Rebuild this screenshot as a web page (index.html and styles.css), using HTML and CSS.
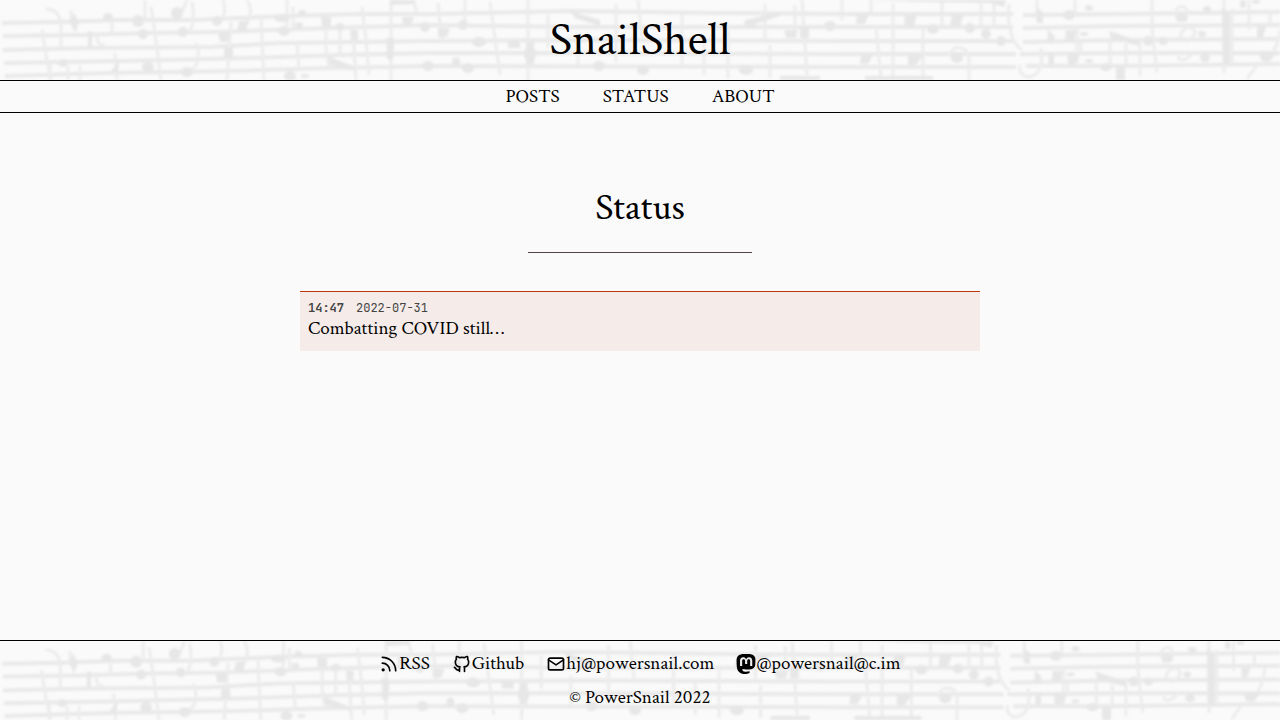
FILE: index.html
```html
<!DOCTYPE html>
<html lang="en">
<head>
<meta charset="utf-8">
<meta name="viewport" content="width=device-width, initial-scale=1">
<title>Status - SnailShell</title>
<link rel="stylesheet" href="styles.css">
</head>
<body>
<svg class="defs" aria-hidden="true">
  <defs>
    <g id="score">
      <g class="staff">
        <path d="M2 23L60 22L120 20L195 20L285 16L360 14L430 14L570 11L720 13L850 14H1013M1023 15L1120 14L1280 12H1320"/>
        <path d="M3 36L80 35L150 33L220 32L330 28L430 25L570 27L740 27L850 27H1013M1023 28L1120 26L1280 25H1320"/>
        <path d="M3 50L90 48L210 47L280 43L430 41L600 40L850 41H1013M1023 42L1120 40L1280 39H1320"/>
        <path d="M4 63L120 61L250 58L340 55L430 53L570 53L850 54H1016M1020 54L1140 53L1280 53H1320"/>
        <path d="M5 76L110 73L230 71L330 68L430 66L850 67H1016M1026 66L1120 66L1280 64H1320"/>
      </g>
      <g class="stems">
        <path d="M46 9Q60 9 61 26V48M42 30L46 55L51 80M71 10V24M99 32Q94 44 105 46M112 23V35M115 53L117 80M145 0V21M151 7L155 33L161 80M187 0L182 12M192 2Q196 25 188 33M196 43Q203 63 190 71M223 0Q227 12 221 19M247 0Q255 12 245 24M231 22L227 80M261 16L264 80M287 0V26M293 7V28M297 42L299 70M326 25V48L329 68M340 29V53M362 7L366 40L369 75M391 0V80M413 0L417 13M353 30L356 80M50 64V80M68 66V80M80 66V80"/>
        <path d="M438 3L442 42M465 0V25M490 2L500 75M528 0V80M548 15V48M578 35V65M616 4V62M638 0L642 38M682 14V66M704 42V75M728 30V78M765 4V40M795 5V38M802 0L807 75M842 0V20M770 45V78"/>
        <path d="M871 0V12M876 26L881 80M893 4V78M923 28V78M942 2V25M969 80V57Q967 46 955 48Q948 53 953 59M981 4V28M994 4V29M1009 4Q1006 38 1022 50M1037 0V20M1041 48Q1045 75 1028 77Q1018 75 1020 65M1075 0V15M1077 27V65M1081 42V55M1110 40V65M1126 44V64M1140 43V76M1152 0V28L1157 72M1176 17Q1174 5 1185 7Q1192 17 1177 21M1180 38Q1183 25 1192 28Q1200 33 1186 42M1178 56Q1181 66 1195 51M1224 0V73M1232 9V64M1249 0V30M1270 10V26M1281 26Q1278 52 1262 66M1247 79L1257 65"/>
      </g>
      <g class="beams">
        <path d="M88 31h4v16h-4zM111 71L119 61L118 74ZM390 0L416 0L414 4L391 5ZM328 56L355 67V71L330 65ZM570 11L600 20V26L575 18ZM745 20L780 12V16L750 26ZM870 0L1006 0L1004 7L990 3L923 2ZM865 76h68v4h-68zM1109 31L1140 41V46L1111 39ZM1222 8l8 5v51h-7zM1116 66h9v14h-9zM780 76h40v4h-40z"/>
      </g>
      <g class="notes">
        <path d="M74 13L79 22L75 33L70 22ZM218 33h12l-2 9h-8zM224 48h9v10h-9zM239 21h10l-3 10h-9zM321 17h10v10h-9zM350 30h8v10h-7zM402 17h12l-3 8h-8zM386 38h8v12h-7zM438 28h12l-3 9h-9zM526 42h8v22h-8zM508 42h12v6h-12zM784 30h14l-3 8h-9zM800 26h9v12h-9zM857 14h12l-4 10h-9zM905 15h12l-3 11h-10zM952 14h12l-4 12h-10zM861 55h12l-5 9h-8zM908 54h16l-8 11h-8zM1037 8l6 4v11h-6zM1048 29l7 8-2 6h-6zM1066 30h10l-2 11h-9zM1049 53h5v11h-6zM1067 53h14l-6 11h-7zM1257 27h9l-3 10h-6zM1258 52h19l-7 9h-8z"/>
        <g>
          <ellipse cx="108" cy="17" rx="5" ry="4"/><ellipse cx="138" cy="21" rx="6" ry="6"/><ellipse cx="143" cy="34" rx="5" ry="5"/><ellipse cx="177" cy="13" rx="6" ry="6"/><ellipse cx="183" cy="32" rx="5" ry="5"/><ellipse cx="63" cy="63" rx="5" ry="4"/><ellipse cx="148" cy="67" rx="6" ry="5"/><ellipse cx="187" cy="72" rx="6" ry="5"/><ellipse cx="217" cy="21" rx="5" ry="5"/><ellipse cx="282" cy="18" rx="8" ry="4"/><ellipse cx="284" cy="31" rx="6" ry="5"/><ellipse cx="302" cy="13" rx="4" ry="3"/><ellipse cx="299" cy="25" rx="4" ry="3"/><ellipse cx="340" cy="27" rx="5" ry="4"/><ellipse cx="390" cy="54" rx="4" ry="6"/><ellipse cx="290" cy="76" rx="6" ry="5"/><ellipse cx="305" cy="76" rx="4" ry="2"/><ellipse cx="425" cy="27" rx="5" ry="5"/><ellipse cx="428" cy="66" rx="6" ry="5"/>
          <ellipse cx="463" cy="25" rx="5" ry="5"/><ellipse cx="479" cy="42" rx="7" ry="5"/><ellipse cx="456" cy="62" rx="4" ry="5"/><ellipse cx="468" cy="68" rx="6" ry="5"/><ellipse cx="515" cy="44" rx="5" ry="4"/><ellipse cx="530" cy="54" rx="6" ry="8"/><ellipse cx="599" cy="66" rx="6" ry="5"/><ellipse cx="643" cy="70" rx="6" ry="5"/><ellipse cx="750" cy="24" rx="6" ry="4"/><ellipse cx="830" cy="26" rx="6" ry="5"/><ellipse cx="746" cy="70" rx="7" ry="5"/>
          <ellipse cx="933" cy="29" rx="6" ry="5"/><ellipse cx="970" cy="28" rx="5" ry="5"/><ellipse cx="986" cy="34" rx="5" ry="5"/><ellipse cx="1001" cy="41" rx="5" ry="5"/><ellipse cx="957" cy="58" rx="6" ry="5"/><ellipse cx="1069" cy="15" rx="6" ry="5"/><ellipse cx="1089" cy="8" rx="4" ry="3"/><ellipse cx="1084" cy="34" rx="4" ry="2"/><ellipse cx="1089" cy="61" rx="4" ry="2"/><ellipse cx="1106" cy="67" rx="6" ry="4"/><ellipse cx="1148" cy="41" rx="5" ry="5"/><ellipse cx="1163" cy="41" rx="5" ry="4"/><ellipse cx="1207" cy="9" rx="4" ry="3"/><ellipse cx="1202" cy="34" rx="4" ry="3"/><ellipse cx="1205" cy="58" rx="5" ry="4"/><ellipse cx="1182" cy="18" rx="6" ry="4"/><ellipse cx="1243" cy="4" rx="3" ry="4"/><ellipse cx="1256" cy="1" rx="4" ry="3"/>
        </g>
      </g>
    </g>
  </defs>
</svg>

<header class="banner">
  <svg class="score" viewBox="0 0 1280 80" preserveAspectRatio="xMinYMin slice" aria-hidden="true"><use href="#score"/></svg>
  <a class="site-title" href="#">SnailShell</a>
</header>
<nav class="nav">
  <a href="#">POSTS</a>
  <a href="#">STATUS</a>
  <a href="#">ABOUT</a>
</nav>

<main class="main">
  <h1 class="page-title">Status</h1>
  <hr class="rule">
  <article class="status">
    <div class="stamp"><b>14:47</b><time datetime="2022-07-31">2022-07-31</time></div>
    <p class="message">Combatting COVID still…</p>
  </article>
</main>

<footer class="footer">
  <svg class="score" viewBox="0 0 1296 80" preserveAspectRatio="xMinYMin slice" aria-hidden="true"><use href="#score"/></svg>
  <div class="links">
    <a href="#"><svg class="icon" viewBox="0 0 24 24" aria-hidden="true"><path d="M4 11a9 9 0 0 1 9 9M4 4a16 16 0 0 1 16 16"/><circle cx="5" cy="19" r="1"/></svg>RSS</a>
    <a href="#"><svg class="icon" viewBox="0 0 24 24" aria-hidden="true"><path d="M9 19c-4.300 1.400-4.300-2.500-6-3m12 5v-3.500c0-1 .1-1.400-.5-2 2.800-.3 5.500-1.400 5.500-6a4.600 4.600 0 0 0-1.300-3.200 4.200 4.200 0 0 0-.1-3.200s-1.100-.3-3.500 1.300a12.300 12.300 0 0 0-6.200 0C6.500 2.800 5.400 3.100 5.400 3.100a4.200 4.200 0 0 0-.1 3.200A4.600 4.600 0 0 0 4 9.500c0 4.600 2.700 5.700 5.500 6-.6.600-.6 1.200-.5 2V21"/></svg>Github</a>
    <a href="#"><svg class="icon" viewBox="0 0 24 24" aria-hidden="true"><rect x="3" y="5" width="18" height="14" rx="2"/><path d="M3 7l9 6 9-6"/></svg>hj@powersnail.com</a>
    <a href="#"><svg class="icon solid" viewBox="0 0 24 24" aria-hidden="true"><path d="M23.268 5.313c-.35-2.578-2.617-4.610-5.304-5.004C17.510.242 15.792 0 11.813 0h-.03c-3.980 0-4.835.242-5.288.309C3.882.692 1.496 2.518.917 5.127.64 6.412.61 7.837.661 9.143c.074 1.874.088 3.745.26 5.611.118 1.240.325 2.470.62 3.680.55 2.237 2.777 4.098 4.960 4.857 2.336.792 4.849.923 7.256.380.265-.061.527-.132.786-.213.585-.184 1.270-.390 1.774-.753a.057.057 0 0 0 .023-.043v-1.809a.052.052 0 0 0-.02-.041.053.053 0 0 0-.046-.010 20.282 20.282 0 0 1-4.709.545c-2.730 0-3.463-1.284-3.674-1.818a5.593 5.593 0 0 1-.319-1.433.053.053 0 0 1 .066-.054c1.517.363 3.072.546 4.632.546.376 0 .750 0 1.125-.010 1.570-.044 3.224-.124 4.768-.422 2.435-.464 4.753-1.920 4.989-5.604.008-.145.030-1.520.030-1.670.002-.512.167-3.630-.024-5.545zm-3.748 9.195h-2.561V8.290c0-1.309-.550-1.976-1.670-1.976-1.230 0-1.846.790-1.846 2.350v3.403h-2.546V8.663c0-1.560-.617-2.350-1.848-2.350-1.112 0-1.668.668-1.670 1.977v6.218H4.822V8.102c0-1.310.337-2.350 1.011-3.120.696-.770 1.608-1.164 2.740-1.164 1.311 0 2.302.500 2.962 1.498l.638 1.060.638-1.060c.660-.999 1.650-1.498 2.960-1.498 1.130 0 2.043.395 2.740 1.164.675.770 1.012 1.810 1.012 3.120z"/></svg>@powersnail@c.im</a>
  </div>
  <p class="copyright">© PowerSnail 2022</p>
</footer>
</body>
</html>
```
FILE: styles.css
```css
* { box-sizing: border-box; }

body {
  margin: 0;
  min-height: 100vh;
  display: flex;
  flex-direction: column;
  background: #fafafa;
  color: #000;
  font: 19px/26px "Crimson Text", "Liberation Serif", serif;
}

a { color: inherit; text-decoration: none; }

.defs { position: absolute; width: 0; height: 0; }

.banner, .footer { position: relative; overflow: hidden; }

.score {
  position: absolute;
  inset: 0;
  width: 100%;
  height: 100%;
  z-index: -1;
  filter: blur(1px);
}

.staff { fill: none; stroke: #e9e9e9; stroke-width: 4; }
.stems { fill: none; stroke: #ececec; stroke-width: 3; }
.beams, .notes { fill: #e7e7e7; }

.banner {
  padding: 10px 0;
  text-align: center;
}

.site-title { display: block; font-size: 47px; line-height: 60px; }

.nav {
  display: flex;
  justify-content: center;
  gap: 43px;
  padding: 3px 0 2px;
  border-top: 1px solid #000;
  border-bottom: 1px solid #000;
}

.main {
  flex: 1;
  width: 100%;
  max-width: 680px;
  margin: 0 auto;
  padding-top: 70px;
}

.page-title {
  margin: 0;
  font-size: 38px;
  font-weight: 400;
  line-height: 50px;
  text-align: center;
}

.rule {
  width: 224px;
  height: 1px;
  margin: 19px auto 38px;
  border: 0;
  background: #504649;
}

.status {
  padding: 8px 8px 9px;
  border-top: 1px solid #bf360c;
  background: #f5ebe8;
}

.stamp {
  display: flex;
  gap: 12px;
  color: #444;
  font: 12px/16px "JetBrains Mono", "Liberation Mono", monospace;
}

.message { margin: 0; }

.footer {
  padding: 10px 0 9px;
  border-top: 1px solid #000;
}

.links {
  display: flex;
  flex-wrap: wrap;
  justify-content: center;
  gap: 0 22px;
}

.links a { display: flex; align-items: center; }

.icon {
  width: 20px;
  height: 20px;
  fill: none;
  stroke: #000;
  stroke-width: 2;
  stroke-linecap: round;
  stroke-linejoin: round;
}

.solid { fill: #000; stroke: none; }

.copyright {
  margin: 8px 0 0;
  text-align: center;
}
```
